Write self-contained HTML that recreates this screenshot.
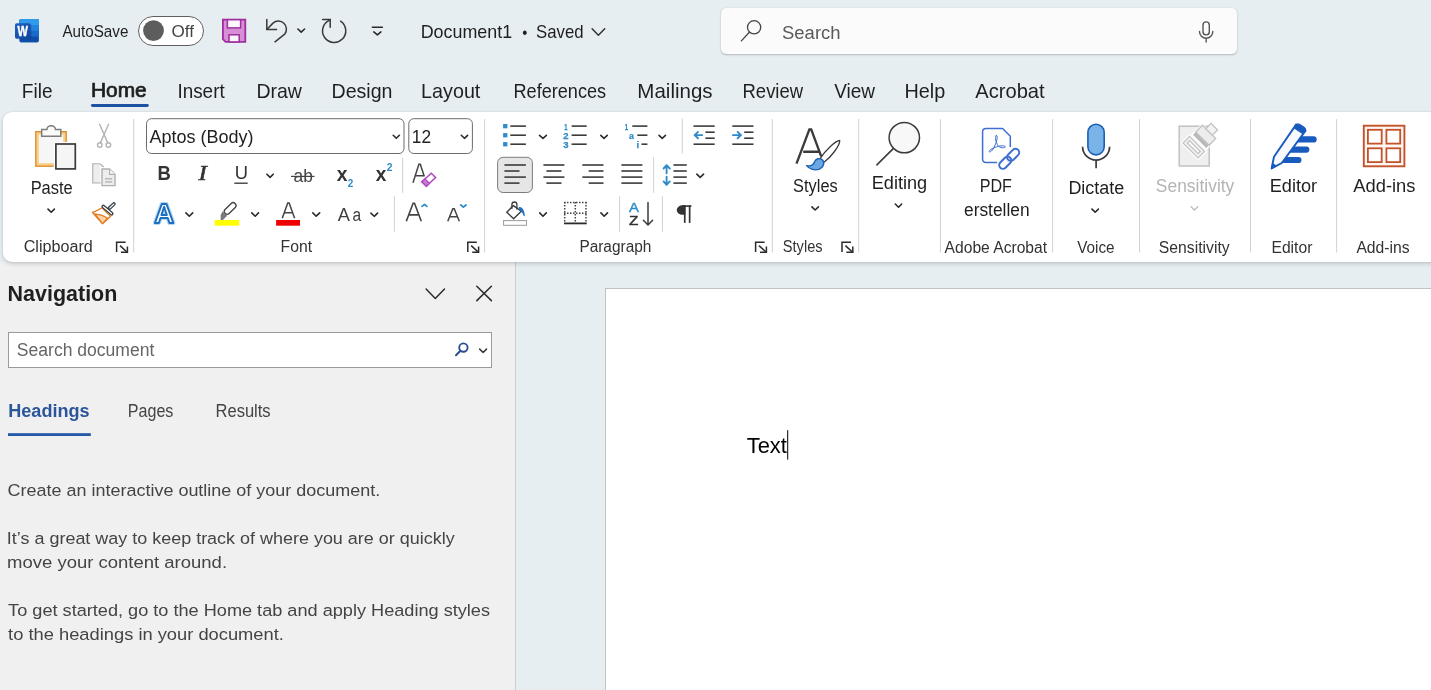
<!DOCTYPE html>
<html lang="en"><head><meta charset="utf-8"><title>Document1 - Word</title>
<style>
html,body{margin:0;padding:0}
body{width:1431px;height:690px;overflow:hidden;position:relative;background:#e7eef1;font-family:"Liberation Sans",sans-serif}
.abs{position:absolute;box-sizing:border-box}
#search{left:721px;top:8px;width:516px;height:46px;background:#fbfbfb;border-radius:5px;box-shadow:0 1px 2px rgba(0,0,0,.22),0 0 1px rgba(0,0,0,.18)}
#ribbon{left:3px;top:112px;width:1440px;height:150px;background:#fff;border-radius:9px 0 0 9px;box-shadow:0 2px 4px rgba(0,0,0,.16),0 0 2px rgba(0,0,0,.10)}
#nav{left:0;top:262px;width:516px;height:428px;background:#f0f0f0;border-right:1px solid #c9ced2}
#docbg{left:516px;top:262px;width:915px;height:428px;background:#e7eef1}
#page{left:605px;top:288px;width:900px;height:420px;background:#fff;border:1px solid #c0c3c5}
#navsearch{left:8px;top:332px;width:484px;height:36px;background:#fff;border:1px solid #9a9a9a}
#ov{left:0;top:0;will-change:transform}
</style></head><body>
<div class="abs" id="docbg"></div>
<div class="abs" id="nav"></div>
<div class="abs" id="navsearch"></div>
<div class="abs" id="page"></div>
<div class="abs" id="search"></div>
<div class="abs" id="ribbon"></div>
<svg class="abs" id="ov" width="1431" height="690" viewBox="0 0 1431 690">
<g id="wordlogo"><clipPath id="wl"><rect x="19.4" y="18.9" width="19.5" height="23.7" rx="1.8"/></clipPath><g clip-path="url(#wl)"><rect x="19" y="18.9" width="21" height="24" fill="#0f4ea6"/><rect x="19" y="18.9" width="21" height="17.6" fill="#1a6acc"/><rect x="19" y="18.9" width="21" height="11.8" fill="#2383dc"/><rect x="19" y="18.9" width="21" height="6.05" fill="#2f9cea"/></g><rect x="15.9" y="24.1" width="15.6" height="15.2" rx="1.6" fill="#0a2d6e" opacity=".28"/><defs><linearGradient id="wg" x1="0" y1="0" x2="1" y2="1"><stop offset="0" stop-color="#1f60c4"/><stop offset="1" stop-color="#12459c"/></linearGradient></defs><rect x="15" y="23.3" width="15.6" height="15.2" rx="1.6" fill="url(#wg)"/></g>
<rect x="138.5" y="16.5" width="65" height="29" fill="#fff" stroke="#5f5f5f" stroke-width="1" rx="14.5" />
<circle cx="153.5" cy="30.6" r="10.4" fill="#5d5d5d"/>
<path d="M222.9,19.7 H245.3 V41.9 H225.6 L222.9,39.2 Z" fill="#d98fd6" stroke="#9d2f9e" stroke-width="1.8" stroke-linejoin="miter"/>
<rect x="227.4" y="19.7" width="13.2" height="8.2" fill="#fdf6fd" stroke="#9d2f9e" stroke-width="1.5" rx="0" />
<rect x="229" y="34.8" width="10.2" height="7.1" fill="#fdf6fd" stroke="#9d2f9e" stroke-width="1.5" rx="0" />
<path d="M266.8,19.5 V29.4 H276.6" fill="none" stroke="#3a3a3a" stroke-width="1.5" stroke-linecap="round" stroke-linejoin="miter"/>
<path d="M267,29.2 L273,23.1 A8.1,8.1 0 0 1 284.7,34.2 L275,41.8" fill="none" stroke="#3a3a3a" stroke-width="1.5" stroke-linecap="round" stroke-linejoin="round"/>
<polyline points="297.9,29.0 301.2,32.1 304.6,29.0" fill="none" stroke="#2b2b2b" stroke-width="1.6" stroke-linecap="round" stroke-linejoin="round"/>
<path d="M322.6,19.6 H330.2 V27.3" fill="none" stroke="#3a3a3a" stroke-width="1.5" stroke-linecap="round" stroke-linejoin="miter"/>
<path d="M340.6,21.2 A11.6,11.6 0 1 1 329.8,20.1" fill="none" stroke="#3a3a3a" stroke-width="1.5" stroke-linecap="round" stroke-linejoin="round"/>
<line x1="372.3" y1="27.2" x2="382.4" y2="27.2" stroke="#2b2b2b" stroke-width="1.5" stroke-linecap="round" />
<polyline points="373.8,31.9 377.4,34.9 380.9,31.9" fill="none" stroke="#2b2b2b" stroke-width="1.6" stroke-linecap="round" stroke-linejoin="round"/>
<polyline points="592.1,28.7 598.4,35.3 604.7,28.7" fill="none" stroke="#333" stroke-width="1.5" stroke-linecap="round" stroke-linejoin="round"/>
<circle cx="754.1" cy="27.3" r="6.6" fill="none" stroke="#444" stroke-width="1.3"/>
<line x1="749.3" y1="32.3" x2="741.4" y2="40.9" stroke="#444" stroke-width="1.3" stroke-linecap="round" />
<rect x="1203" y="21.85" width="6.3" height="13" fill="none" stroke="#555" stroke-width="1.4" rx="3.15" />
<path d="M1199.5,31.4 A6.65,6.9 0 0 0 1212.8,31.4 M1206.15,38.4 V42" fill="none" stroke="#555" stroke-width="1.4" stroke-linecap="round" stroke-linejoin="round"/>
<rect x="91" y="104" width="57.8" height="2.9" fill="#1d51a3" stroke="none" stroke-width="1" rx="1.45" />
<defs><linearGradient id="og" x1="0" x2="1" y1="0" y2="0"><stop offset="0" stop-color="#d8892b"/><stop offset="1" stop-color="#fbd28c"/></linearGradient></defs>
<rect x="35.1" y="131" width="31.8" height="35.9" fill="#dd8f30" stroke="none" stroke-width="1" rx="0" />
<rect x="36.5" y="132.4" width="29" height="33.1" fill="#fbcf85" stroke="none" stroke-width="1" rx="0" />
<rect x="38.8" y="134.7" width="24.4" height="28.5" fill="#f6f6f6" stroke="none" stroke-width="1" rx="0" />
<path d="M41.7,136.3 V129.5 H46.9 A4.3,3.8 0 0 1 55.5,129.5 H60.8 V136.3 Z" fill="#fafafa" stroke="#7d7d7d" stroke-width="1.5" stroke-linejoin="miter"/>
<rect x="53.8" y="141.9" width="23.5" height="29" fill="#fff" stroke="none" stroke-width="1" rx="0" />
<rect x="55.9" y="144" width="19.4" height="24.9" fill="#f5f5f5" stroke="#3b3b3b" stroke-width="1.7" rx="0" />
<polyline points="48.0,209.1 51.2,212.2 54.4,209.1" fill="none" stroke="#2b2b2b" stroke-width="1.6" stroke-linecap="round" stroke-linejoin="round"/>
<path d="M99.6,124.2 L107.6,142.6 M108.6,124.2 L100.5,142.6" fill="none" stroke="#b4b4b4" stroke-width="1.4" stroke-linecap="round" stroke-linejoin="round"/>
<circle cx="99.8" cy="145" r="2.3" fill="none" stroke="#b4b4b4" stroke-width="1.4"/><circle cx="108.4" cy="145" r="2.3" fill="none" stroke="#b4b4b4" stroke-width="1.4"/>
<path d="M100.2,163.9 H92.9 V182.9 H100.6 M100.2,163.9 L103.6,166.9" fill="none" stroke="#b0b0b0" stroke-width="1.4" stroke-linejoin="miter"/>
<rect x="93.6" y="164.6" width="6.8" height="17.6" fill="#eeeeee" stroke="none" stroke-width="1" rx="0" />
<path d="M102,169 H109.6 L115,174.3 V185.6 H102 Z" fill="#ededed" stroke="#b0b0b0" stroke-width="1.4" stroke-linejoin="miter"/>
<path d="M109.6,169 V174.3 H115" fill="#fafafa" stroke="#b0b0b0" stroke-width="1.2" stroke-linejoin="miter"/>
<line x1="105" y1="178.8" x2="112.2" y2="178.8" stroke="#b0b0b0" stroke-width="1.3" stroke-linecap="butt" />
<line x1="105" y1="181.9" x2="112.2" y2="181.9" stroke="#b0b0b0" stroke-width="1.3" stroke-linecap="butt" />
<path d="M101.8,207.8 Q96.4,211.4 92.5,212.5 L102.5,223.7 Q107,219.8 110.6,216.2 Z" fill="#fff" stroke="#e07b1f" stroke-width="1.3" stroke-linejoin="round"/>
<path d="M94.9,213.9 Q101.4,214.6 107.5,217.9 L102.5,223.5 Z" fill="#fbd5a6" stroke="#e07b1f" stroke-width="1.1" stroke-linejoin="round"/>
<path d="M103.3,206.5 L111.7,213.7 M109.4,208.2 L113.9,204" fill="none" stroke="#37424b" stroke-width="3.7" stroke-linecap="round"/>
<path d="M103.5,206.7 L111.5,213.5 M109.8,207.9 L113.8,204.1" fill="none" stroke="#fff" stroke-width="1.3" stroke-linecap="round"/>
<g fill="none" stroke="#2b2b2b" stroke-width="1.5" stroke-linejoin="miter"><path d="M116.6,251.9 V242.2 H125.6"/><path d="M120,245.6 L127.2,252.2"/><path d="M127.4,246.4 V252.2 H121"/></g>
<rect x="133.2" y="119" width="1" height="133.5" fill="#d2d2d2"/>
<rect x="146.5" y="118.7" width="257.5" height="34.8" fill="#fff" stroke="#6b6b6b" stroke-width="1" rx="5" />
<polyline points="393.2,135.3 396.3,138.3 399.4,135.3" fill="none" stroke="#2b2b2b" stroke-width="1.6" stroke-linecap="round" stroke-linejoin="round"/>
<rect x="408.8" y="118.7" width="63.6" height="34.8" fill="#fff" stroke="#6b6b6b" stroke-width="1" rx="5" />
<polyline points="461.3,135.3 464.4,138.3 467.6,135.3" fill="none" stroke="#2b2b2b" stroke-width="1.6" stroke-linecap="round" stroke-linejoin="round"/>
<line x1="234.3" y1="183.2" x2="247.7" y2="183.2" stroke="#333" stroke-width="1.3" stroke-linecap="butt" />
<polyline points="266.9,174.2 270.1,177.4 273.2,174.2" fill="none" stroke="#2b2b2b" stroke-width="1.6" stroke-linecap="round" stroke-linejoin="round"/>
<line x1="291" y1="176.4" x2="314.5" y2="176.4" stroke="#444" stroke-width="1.2" stroke-linecap="butt" />
<rect x="402.1" y="157.5" width="1" height="35.30000000000001" fill="#d2d2d2"/>
<path d="M412.98,182.7 L418.90,164.15 H420.30 L424.29,176.4 M415.11,175.75 H424.09" fill="none" stroke="#444" stroke-width="1.5" stroke-linejoin="miter" stroke-miterlimit="1.5"/>
<path d="M431.3,173.2 L435.6,177.5 L426.4,186.3 L421.8,181.8 Z" fill="#fff" stroke="#fff" stroke-width="3" stroke-linecap="round" stroke-linejoin="round"/>
<path d="M431.3,173.2 L435.6,177.5 L426.4,186.3 L421.8,181.8 Z" fill="#fff" stroke="#b146c2" stroke-width="1.5" stroke-linejoin="miter"/>
<path d="M425,178.8 L429.4,183.3 L426.4,186.3 L421.8,181.8 Z" fill="#c77bd3" stroke="#b146c2" stroke-width="1.2" stroke-linejoin="miter"/>
<text x="154.2" y="222.5" font-family="Liberation Sans, sans-serif" font-weight="bold" font-size="26.8" textLength="19.8" lengthAdjust="spacingAndGlyphs" fill="none" stroke="#b3d8f3" stroke-width="4" stroke-linejoin="round">A</text>
<text x="154.2" y="222.5" font-family="Liberation Sans, sans-serif" font-weight="bold" font-size="26.8" textLength="19.8" lengthAdjust="spacingAndGlyphs" fill="#fff" stroke="#1c6fc0" stroke-width="1.9" stroke-linejoin="round">A</text>
<polyline points="185.9,212.9 189.3,216.2 192.7,212.9" fill="none" stroke="#2b2b2b" stroke-width="1.6" stroke-linecap="round" stroke-linejoin="round"/>
<g transform="translate(229.7,208.9) rotate(-44)"><rect x="-6.4" y="-2.9" width="14" height="5.8" rx="2.7" fill="#fff" stroke="#444" stroke-width="1.4"/><path d="M-6.6,-3.1 L-10.6,-2 L-15.8,3.4 L-6.6,3.1 Z" fill="#7a7a7a"/></g>
<rect x="214.7" y="220" width="24.5" height="5.7" fill="#ffff00" stroke="none" stroke-width="1" rx="0" />
<polyline points="251.8,212.9 255.2,216.2 258.5,212.9" fill="none" stroke="#2b2b2b" stroke-width="1.6" stroke-linecap="round" stroke-linejoin="round"/>
<path d="M282.28,218.2 L287.75,202.95 H289.15 L294.62,218.2 M284.14,212.76 H292.76" fill="none" stroke="#444" stroke-width="1.5" stroke-linejoin="miter" stroke-miterlimit="1.5"/>
<rect x="276.1" y="220" width="23.9" height="5.7" fill="#ee0000" stroke="none" stroke-width="1" rx="0" />
<polyline points="312.8,212.9 316.2,216.2 319.7,212.9" fill="none" stroke="#2b2b2b" stroke-width="1.6" stroke-linecap="round" stroke-linejoin="round"/>
<polyline points="370.9,213.1 374.2,216.3 377.6,213.1" fill="none" stroke="#2b2b2b" stroke-width="1.6" stroke-linecap="round" stroke-linejoin="round"/>
<rect x="393.9" y="196.3" width="1" height="35.5" fill="#d2d2d2"/>
<path d="M406.32,221.3 L413.10,203.3 H414.50 L421.28,221.3 M408.63,214.91 H418.97" fill="none" stroke="#444" stroke-width="1.6" stroke-linejoin="miter" stroke-miterlimit="1.5"/>
<polyline points="422.1,206.4 424.5,204.4 426.9,206.4" fill="none" stroke="#2e8bc8" stroke-width="1.8" stroke-linecap="round" stroke-linejoin="round"/>
<path d="M447.78,221.3 L452.85,208.65 H454.25 L459.32,221.3 M449.50,216.74 H457.60" fill="none" stroke="#444" stroke-width="1.5" stroke-linejoin="miter" stroke-miterlimit="1.5"/>
<polyline points="460.8,205.0 463.4,207.1 466.0,205.0" fill="none" stroke="#2e8bc8" stroke-width="1.8" stroke-linecap="round" stroke-linejoin="round"/>
<g fill="none" stroke="#2b2b2b" stroke-width="1.5" stroke-linejoin="miter"><path d="M467.8,251.9 V242.2 H476.8"/><path d="M471.2,245.6 L478.4,252.2"/><path d="M478.59999999999997,246.4 V252.2 H472.2"/></g>
<rect x="484.1" y="119" width="1" height="133.5" fill="#d2d2d2"/>
<rect x="503.1" y="124.0" width="4.3" height="4.3" fill="#2e8bc8" stroke="none" stroke-width="1" rx="0" />
<line x1="510.3" y1="126.1" x2="525.9" y2="126.1" stroke="#3b3b3b" stroke-width="1.6" stroke-linecap="butt" />
<rect x="503.1" y="133.1" width="4.3" height="4.3" fill="#2e8bc8" stroke="none" stroke-width="1" rx="0" />
<line x1="510.3" y1="135.2" x2="525.9" y2="135.2" stroke="#3b3b3b" stroke-width="1.6" stroke-linecap="butt" />
<rect x="503.1" y="142.1" width="4.3" height="4.3" fill="#2e8bc8" stroke="none" stroke-width="1" rx="0" />
<line x1="510.3" y1="144.2" x2="525.9" y2="144.2" stroke="#3b3b3b" stroke-width="1.6" stroke-linecap="butt" />
<polyline points="539.5,135.3 543.0,138.3 546.4,135.3" fill="none" stroke="#2b2b2b" stroke-width="1.6" stroke-linecap="round" stroke-linejoin="round"/>
<line x1="571.6" y1="126.1" x2="586.7" y2="126.1" stroke="#3b3b3b" stroke-width="1.6" stroke-linecap="butt" />
<line x1="571.6" y1="135.2" x2="586.7" y2="135.2" stroke="#3b3b3b" stroke-width="1.6" stroke-linecap="butt" />
<line x1="571.6" y1="144.2" x2="586.7" y2="144.2" stroke="#3b3b3b" stroke-width="1.6" stroke-linecap="butt" />
<polyline points="600.8,135.3 604.0,138.3 607.3,135.3" fill="none" stroke="#2b2b2b" stroke-width="1.6" stroke-linecap="round" stroke-linejoin="round"/>
<line x1="632.3" y1="126.1" x2="647.4" y2="126.1" stroke="#3b3b3b" stroke-width="1.6" stroke-linecap="butt" />
<line x1="637.3" y1="135.2" x2="647.4" y2="135.2" stroke="#3b3b3b" stroke-width="1.6" stroke-linecap="butt" />
<line x1="641.5" y1="144.2" x2="647.4" y2="144.2" stroke="#3b3b3b" stroke-width="1.6" stroke-linecap="butt" />
<polyline points="659.0,135.3 662.2,138.3 665.5,135.3" fill="none" stroke="#2b2b2b" stroke-width="1.6" stroke-linecap="round" stroke-linejoin="round"/>
<rect x="681.8" y="118.5" width="1" height="34.900000000000006" fill="#d2d2d2"/>
<line x1="693.5" y1="126.1" x2="714.7" y2="126.1" stroke="#3b3b3b" stroke-width="1.6" stroke-linecap="butt" />
<line x1="693.5" y1="144.2" x2="714.7" y2="144.2" stroke="#3b3b3b" stroke-width="1.6" stroke-linecap="butt" />
<line x1="705.4" y1="132.2" x2="714.7" y2="132.2" stroke="#3b3b3b" stroke-width="1.6" stroke-linecap="butt" />
<line x1="705.4" y1="138.2" x2="714.7" y2="138.2" stroke="#3b3b3b" stroke-width="1.6" stroke-linecap="butt" />
<line x1="732.3" y1="126.1" x2="753.5" y2="126.1" stroke="#3b3b3b" stroke-width="1.6" stroke-linecap="butt" />
<line x1="732.3" y1="144.2" x2="753.5" y2="144.2" stroke="#3b3b3b" stroke-width="1.6" stroke-linecap="butt" />
<line x1="744.1999999999999" y1="132.2" x2="753.5" y2="132.2" stroke="#3b3b3b" stroke-width="1.6" stroke-linecap="butt" />
<line x1="744.1999999999999" y1="138.2" x2="753.5" y2="138.2" stroke="#3b3b3b" stroke-width="1.6" stroke-linecap="butt" />
<path d="M702.2,135.1 H694.8 M698,131.9 L694.6,135.1 L698,138.3" fill="none" stroke="#2e8bc8" stroke-width="1.9" stroke-linecap="round" stroke-linejoin="round"/>
<path d="M732.9,135.1 H740.8 M737.6,131.9 L741,135.1 L737.6,138.3" fill="none" stroke="#2e8bc8" stroke-width="1.9" stroke-linecap="round" stroke-linejoin="round"/>
<rect x="497.6" y="157.3" width="34.8" height="35.2" fill="#e6e6e6" stroke="#7c7c7c" stroke-width="1" rx="5.5" />
<line x1="504.4" y1="165" x2="525.9" y2="165" stroke="#3b3b3b" stroke-width="1.6" stroke-linecap="butt" />
<line x1="504.4" y1="171" x2="519.5" y2="171" stroke="#3b3b3b" stroke-width="1.6" stroke-linecap="butt" />
<line x1="504.4" y1="177.1" x2="525.9" y2="177.1" stroke="#3b3b3b" stroke-width="1.6" stroke-linecap="butt" />
<line x1="504.4" y1="183.1" x2="519.5" y2="183.1" stroke="#3b3b3b" stroke-width="1.6" stroke-linecap="butt" />
<line x1="543.4" y1="165" x2="564.4" y2="165" stroke="#3b3b3b" stroke-width="1.6" stroke-linecap="butt" />
<line x1="546.4" y1="171" x2="561.5" y2="171" stroke="#3b3b3b" stroke-width="1.6" stroke-linecap="butt" />
<line x1="543.4" y1="177.1" x2="564.4" y2="177.1" stroke="#3b3b3b" stroke-width="1.6" stroke-linecap="butt" />
<line x1="546.4" y1="183.1" x2="561.5" y2="183.1" stroke="#3b3b3b" stroke-width="1.6" stroke-linecap="butt" />
<line x1="582.3" y1="165" x2="603.5" y2="165" stroke="#3b3b3b" stroke-width="1.6" stroke-linecap="butt" />
<line x1="588.7" y1="171" x2="603.5" y2="171" stroke="#3b3b3b" stroke-width="1.6" stroke-linecap="butt" />
<line x1="582.3" y1="177.1" x2="603.5" y2="177.1" stroke="#3b3b3b" stroke-width="1.6" stroke-linecap="butt" />
<line x1="588.7" y1="183.1" x2="603.5" y2="183.1" stroke="#3b3b3b" stroke-width="1.6" stroke-linecap="butt" />
<line x1="621.4" y1="165" x2="642.4" y2="165" stroke="#3b3b3b" stroke-width="1.6" stroke-linecap="butt" />
<line x1="621.4" y1="171" x2="642.4" y2="171" stroke="#3b3b3b" stroke-width="1.6" stroke-linecap="butt" />
<line x1="621.4" y1="177.1" x2="642.4" y2="177.1" stroke="#3b3b3b" stroke-width="1.6" stroke-linecap="butt" />
<line x1="621.4" y1="183.1" x2="642.4" y2="183.1" stroke="#3b3b3b" stroke-width="1.6" stroke-linecap="butt" />
<rect x="653.1" y="157.2" width="1" height="35.60000000000002" fill="#d2d2d2"/>
<line x1="673.4" y1="165" x2="686.8" y2="165" stroke="#3b3b3b" stroke-width="1.6" stroke-linecap="butt" />
<line x1="673.4" y1="171" x2="686.8" y2="171" stroke="#3b3b3b" stroke-width="1.6" stroke-linecap="butt" />
<line x1="673.4" y1="177.1" x2="686.8" y2="177.1" stroke="#3b3b3b" stroke-width="1.6" stroke-linecap="butt" />
<line x1="673.4" y1="183.1" x2="686.8" y2="183.1" stroke="#3b3b3b" stroke-width="1.6" stroke-linecap="butt" />
<path d="M666.6,173.3 V165.4 M663.6,168.5 L666.6,165.2 L669.8,168.5 M666.6,176.7 V184.6 M663.6,181.4 L666.6,184.8 L669.8,181.4" fill="none" stroke="#2e8bc8" stroke-width="1.9" stroke-linecap="round" stroke-linejoin="round"/>
<polyline points="696.8,174.2 700.2,177.4 703.6,174.2" fill="none" stroke="#2b2b2b" stroke-width="1.6" stroke-linecap="round" stroke-linejoin="round"/>
<path d="M513.4,205.6 L521.3,211.3 L513.6,218.8 L506.8,212.2 Z" fill="#fff" stroke="#3b3b3b" stroke-width="1.4" stroke-linejoin="round"/>
<path d="M511.9,208.6 V204.4 Q512,202 514.4,202 Q516.9,202 516.9,204.6 V209" fill="none" stroke="#3b3b3b" stroke-width="1.3" stroke-linecap="round" stroke-linejoin="round"/>
<path d="M519.3,207.6 Q523.6,207.8 524.2,215.6 Q523.2,211.6 520.6,210.6 Z" fill="#1e6fbf" stroke="#1e6fbf" stroke-width="1.2" stroke-linecap="round" stroke-linejoin="round"/>
<rect x="503.6" y="220.6" width="22.9" height="4.7" fill="#fff" stroke="#9a9a9a" stroke-width="1" rx="0" />
<polyline points="539.7,212.9 543.0,216.2 546.3,212.9" fill="none" stroke="#2b2b2b" stroke-width="1.6" stroke-linecap="round" stroke-linejoin="round"/>
<line x1="564" y1="202.6" x2="586.8" y2="202.6" stroke="#444" stroke-width="1.5" stroke-linecap="butt" stroke-dasharray="1.5 1.5"/>
<line x1="564" y1="213.2" x2="586.8" y2="213.2" stroke="#444" stroke-width="1.5" stroke-linecap="butt" stroke-dasharray="1.5 1.5"/>
<line x1="564.7" y1="202" x2="564.7" y2="222" stroke="#444" stroke-width="1.5" stroke-linecap="butt" stroke-dasharray="1.5 1.5"/>
<line x1="575.3" y1="202" x2="575.3" y2="222" stroke="#444" stroke-width="1.5" stroke-linecap="butt" stroke-dasharray="1.5 1.5"/>
<line x1="586" y1="202" x2="586" y2="222" stroke="#444" stroke-width="1.5" stroke-linecap="butt" stroke-dasharray="1.5 1.5"/>
<line x1="564" y1="223.4" x2="586.8" y2="223.4" stroke="#2b2b2b" stroke-width="1.8" stroke-linecap="butt" />
<polyline points="600.9,212.9 604.2,216.2 607.5,212.9" fill="none" stroke="#2b2b2b" stroke-width="1.6" stroke-linecap="round" stroke-linejoin="round"/>
<rect x="619.1" y="196.3" width="1" height="35.5" fill="#d2d2d2"/>
<path d="M648,202.4 V224.8 M643.4,220.3 L648,225 L652.6,220.3" fill="none" stroke="#3b3b3b" stroke-width="1.5" stroke-linecap="round" stroke-linejoin="round"/>
<rect x="661.9" y="196.3" width="1" height="35.5" fill="#d2d2d2"/>
<path d="M685.4,205.3 H682.6 A5.9,4.75 0 0 0 682.6,214.8 H685.4 Z" fill="#333" stroke="none" stroke-width="0" stroke-linecap="round" stroke-linejoin="round"/>
<rect x="682" y="205.3" width="9.4" height="1.6" fill="#333" stroke="none" stroke-width="1" rx="0" />
<rect x="683.9" y="205.3" width="1.7" height="17.6" fill="#333" stroke="none" stroke-width="1" rx="0" />
<rect x="688.8" y="205.3" width="1.7" height="17.6" fill="#333" stroke="none" stroke-width="1" rx="0" />
<g fill="none" stroke="#2b2b2b" stroke-width="1.5" stroke-linejoin="miter"><path d="M755.6,251.9 V242.2 H764.6"/><path d="M759,245.6 L766.2,252.2"/><path d="M766.4,246.4 V252.2 H760"/></g>
<rect x="771.8" y="119" width="1" height="133.5" fill="#d2d2d2"/>
<path d="M796.5,163.6 L809.4,129.4 H811.2 L821.2,156.4 M803.2,151.7 H819.4" fill="none" stroke="#3b3b3b" stroke-width="2.35" stroke-linejoin="miter" stroke-miterlimit="2" stroke-linecap="butt"/>
<path d="M839.7,140.5 C840,145.4 831.2,157 824,162.3 L820.2,158.5 C825.2,150.4 835.8,140.4 839.7,140.5 Z" fill="#fff" stroke="#3b3b3b" stroke-width="1.3" stroke-linecap="round" stroke-linejoin="round"/>
<path d="M806.6,165.6 C811,166.6 813.6,164.6 814.6,161.8 C815.8,158.6 819.6,157.6 822.2,159.8 C825,162.4 823.8,167.6 818.8,169.4 C814,170.8 809,168.6 806.6,165.6 Z" fill="#6aa8e4" stroke="#1d62b0" stroke-width="1.4" stroke-linecap="round" stroke-linejoin="round"/>
<polyline points="811.9,206.9 815.1,210.0 818.4,206.9" fill="none" stroke="#2b2b2b" stroke-width="1.6" stroke-linecap="round" stroke-linejoin="round"/>
<g fill="none" stroke="#2b2b2b" stroke-width="1.5" stroke-linejoin="miter"><path d="M842.0,251.9 V242.2 H851.0"/><path d="M845.4,245.6 L852.6,252.2"/><path d="M852.8,246.4 V252.2 H846.4"/></g>
<rect x="858.2" y="119" width="1" height="133.5" fill="#d2d2d2"/>
<circle cx="904.3" cy="137.6" r="15.2" fill="#f8f8f8" stroke="#3b3b3b" stroke-width="1.5"/>
<line x1="893.2" y1="148.6" x2="876.9" y2="164.9" stroke="#3b3b3b" stroke-width="1.6" stroke-linecap="round" />
<polyline points="895.3,204.0 898.5,207.2 901.7,204.0" fill="none" stroke="#2b2b2b" stroke-width="1.6" stroke-linecap="round" stroke-linejoin="round"/>
<rect x="939.9" y="119" width="1" height="133.5" fill="#d2d2d2"/>
<path d="M1010.3,146.6 V136.3 L1002.6,128.4 H986 Q982.6,128.4 982.6,131.8 V159 Q982.6,162.4 986,162.4 H996.6" fill="none" stroke="#3f6fd1" stroke-width="1.5" stroke-linecap="round" stroke-linejoin="round"/>
<path d="M996.2,135.6 C994.6,135.8 995.4,140.6 997.4,144.6 C998.8,147.6 1003,148.6 1005.2,147.2 C1006,146.2 1003.6,145.4 999.8,146 C995.6,146.8 990.6,149 989.4,150.8 C988.4,152.4 990.6,152.4 992.4,150 C994.4,147.4 997.4,140.4 997.2,137 C997.2,135.8 996.6,135.5 996.2,135.6 Z" fill="none" stroke="#3f6fd1" stroke-width="1" stroke-linecap="round" stroke-linejoin="round"/>
<g transform="translate(1009.2,158.8) rotate(-45)" fill="none" stroke="#3f6fd1" stroke-width="2"><rect x="-12.6" y="-3.7" width="14" height="7.4" rx="3.7" stroke="#fff" stroke-width="4.4"/><rect x="-1.4" y="-3.7" width="14" height="7.4" rx="3.7" stroke="#fff" stroke-width="4.4"/><rect x="-12.6" y="-3.7" width="14" height="7.4" rx="3.7"/><rect x="-1.4" y="-3.7" width="14" height="7.4" rx="3.7"/></g>
<rect x="1052.1" y="119" width="1" height="133.5" fill="#d2d2d2"/>
<rect x="1087.9" y="124.3" width="16.3" height="30.6" fill="#7ab3e8" stroke="#1c5fb3" stroke-width="1.6" rx="8.15" />
<path d="M1082.6,146.8 A13.5,13.3 0 0 0 1109.6,146.8 M1096.1,160.3 V168.2" fill="none" stroke="#3b3b3b" stroke-width="1.7" stroke-linecap="butt"/>
<polyline points="1091.9,209.1 1095.2,212.2 1098.4,209.1" fill="none" stroke="#2b2b2b" stroke-width="1.6" stroke-linecap="round" stroke-linejoin="round"/>
<rect x="1139.0" y="119" width="1" height="133.5" fill="#d2d2d2"/>
<rect x="1179.2" y="126.2" width="30" height="39.8" fill="#efefef" stroke="#c2c2c2" stroke-width="1.5" rx="0" />
<g transform="translate(1193.8,147.2) rotate(-45)"><rect x="-4.6" y="-10.6" width="9.2" height="21.2" fill="#f3f3f3" stroke="#fff" stroke-width="3.6"/><rect x="8.2" y="-9.4" width="13.4" height="18.8" fill="#ececec" stroke="#fff" stroke-width="3"/><rect x="-4.6" y="-10.6" width="9.2" height="21.2" fill="#f3f3f3" stroke="#c2c2c2" stroke-width="1.3"/><rect x="-1.6" y="-7.6" width="3.2" height="15.2" fill="#fafafa" stroke="#c2c2c2" stroke-width="1.2"/><rect x="8.2" y="-9.4" width="4" height="18.8" fill="#b9b9b9"/><rect x="12.2" y="-9.4" width="9.4" height="18.8" fill="#ededed" stroke="#c2c2c2" stroke-width="1.3"/><rect x="21.6" y="-4.6" width="7.4" height="9.2" fill="#f3f3f3" stroke="#c2c2c2" stroke-width="1.3"/></g>
<polyline points="1191.1,206.8 1194.4,210.0 1197.7,206.8" fill="none" stroke="#bdbdbd" stroke-width="1.4" stroke-linecap="round" stroke-linejoin="round"/>
<rect x="1250.0" y="119" width="1" height="133.5" fill="#d2d2d2"/>
<line x1="1293" y1="139.4" x2="1313.6" y2="139.4" stroke="#185abd" stroke-width="6.2" stroke-linecap="round" />
<line x1="1288" y1="149.6" x2="1306.3" y2="149.6" stroke="#185abd" stroke-width="6.2" stroke-linecap="round" />
<line x1="1282" y1="160" x2="1298.4" y2="160" stroke="#185abd" stroke-width="6.2" stroke-linecap="round" />
<path d="M1296.2,124.4 L1305.6,130.6 L1281.8,163 L1271.6,168.4 L1274,156.8 Z" fill="#f7f9fd" stroke="#185abd" stroke-width="1.9" stroke-linejoin="round"/>
<path d="M1296.4,124.6 Q1297.8,123.4 1299.6,124.2 L1304.8,127.6 Q1306,128.8 1305.2,130.6 L1302.8,133.8 L1294,128 Z" fill="#185abd" stroke="#185abd" stroke-width="1" stroke-linejoin="round"/>
<path d="M1271.6,168.4 L1272.6,163.4 L1276,165.8 Z" fill="#185abd" stroke="#185abd" stroke-width="1" stroke-linecap="round" stroke-linejoin="round"/>
<rect x="1336.1" y="119" width="1" height="133.5" fill="#d2d2d2"/>
<rect x="1363.8" y="125.7" width="40.6" height="40.6" fill="#fdf7f4" stroke="#c4532b" stroke-width="1.9" rx="0" />
<rect x="1367.9" y="129.8" width="13.8" height="13.8" fill="#fff" stroke="#c4532b" stroke-width="1.8" rx="0" />
<rect x="1386.4" y="129.8" width="13.8" height="13.8" fill="#fff" stroke="#c4532b" stroke-width="1.8" rx="0" />
<rect x="1367.9" y="148.3" width="13.8" height="13.8" fill="#fff" stroke="#c4532b" stroke-width="1.8" rx="0" />
<rect x="1386.4" y="148.3" width="13.8" height="13.8" fill="#fff" stroke="#c4532b" stroke-width="1.8" rx="0" />
<polyline points="426.1,289.1 435.3,298.5 444.5,289.1" fill="none" stroke="#2b2b2b" stroke-width="1.5" stroke-linecap="round" stroke-linejoin="round"/>
<path d="M476.8,286.2 L491.4,300.6 M491.4,286.2 L476.8,300.6" fill="none" stroke="#2b2b2b" stroke-width="1.5" stroke-linecap="round"/>
<circle cx="463.4" cy="347.6" r="4.2" fill="none" stroke="#2b4f8e" stroke-width="1.9"/>
<line x1="460.4" y1="350.8" x2="456" y2="355.2" stroke="#2b4f8e" stroke-width="2" stroke-linecap="round" />
<polyline points="479.7,349.1 483.1,352.5 486.5,349.1" fill="none" stroke="#333" stroke-width="1.5" stroke-linecap="round" stroke-linejoin="round"/>
<rect x="8" y="433.2" width="82.8" height="2.8" fill="#2358a8" stroke="none" stroke-width="1" rx="0" />
<rect x="787.2" y="430.2" width="1" height="29.4" fill="#000" stroke="none" stroke-width="1" rx="0" />
<g id="labels">
<text x="62.40" y="37" font-family="Liberation Sans, sans-serif" font-size="16" fill="#1f1f1f" textLength="66.01" lengthAdjust="spacingAndGlyphs" >AutoSave</text>
<text x="171.60" y="37" font-family="Liberation Sans, sans-serif" font-size="16" fill="#444" textLength="22.45" lengthAdjust="spacingAndGlyphs" >Off</text>
<text x="420.68" y="37.7" font-family="Liberation Sans, sans-serif" font-size="17.7" fill="#1f1f1f" textLength="91.53" lengthAdjust="spacingAndGlyphs" >Document1</text>
<text x="522.14" y="37.5" font-family="Liberation Sans, sans-serif" font-size="16" fill="#1f1f1f" textLength="5.11" lengthAdjust="spacingAndGlyphs" >•</text>
<text x="535.99" y="37.7" font-family="Liberation Sans, sans-serif" font-size="17.7" fill="#1f1f1f" textLength="47.61" lengthAdjust="spacingAndGlyphs" >Saved</text>
<text x="782.04" y="38.5" font-family="Liberation Sans, sans-serif" font-size="19.2" fill="#5a5a5a" textLength="58.51" lengthAdjust="spacingAndGlyphs" >Search</text>
<text x="21.86" y="97.7" font-family="Liberation Sans, sans-serif" font-size="19.8" fill="#1f1f1f" textLength="30.69" lengthAdjust="spacingAndGlyphs" >File</text>
<text x="90.97" y="97.4" font-family="Liberation Sans, sans-serif" font-size="19.3" fill="#1f1f1f" textLength="55.74" lengthAdjust="spacingAndGlyphs" stroke="#1f1f1f" stroke-width="0.7">Home</text>
<text x="177.43" y="97.6" font-family="Liberation Sans, sans-serif" font-size="19.8" fill="#1f1f1f" textLength="47.26" lengthAdjust="spacingAndGlyphs" >Insert</text>
<text x="256.42" y="97.6" font-family="Liberation Sans, sans-serif" font-size="19.8" fill="#1f1f1f" textLength="45.50" lengthAdjust="spacingAndGlyphs" >Draw</text>
<text x="331.51" y="97.6" font-family="Liberation Sans, sans-serif" font-size="19.8" fill="#1f1f1f" textLength="61.00" lengthAdjust="spacingAndGlyphs" >Design</text>
<text x="421.10" y="97.6" font-family="Liberation Sans, sans-serif" font-size="19.8" fill="#1f1f1f" textLength="59.25" lengthAdjust="spacingAndGlyphs" >Layout</text>
<text x="513.53" y="97.6" font-family="Liberation Sans, sans-serif" font-size="19.8" fill="#1f1f1f" textLength="92.59" lengthAdjust="spacingAndGlyphs" >References</text>
<text x="637.34" y="97.6" font-family="Liberation Sans, sans-serif" font-size="19.8" fill="#1f1f1f" textLength="75.24" lengthAdjust="spacingAndGlyphs" >Mailings</text>
<text x="742.50" y="97.6" font-family="Liberation Sans, sans-serif" font-size="19.8" fill="#1f1f1f" textLength="60.60" lengthAdjust="spacingAndGlyphs" >Review</text>
<text x="834.16" y="97.6" font-family="Liberation Sans, sans-serif" font-size="19.8" fill="#1f1f1f" textLength="40.87" lengthAdjust="spacingAndGlyphs" >View</text>
<text x="904.50" y="97.6" font-family="Liberation Sans, sans-serif" font-size="19.8" fill="#1f1f1f" textLength="40.79" lengthAdjust="spacingAndGlyphs" >Help</text>
<text x="975.30" y="97.6" font-family="Liberation Sans, sans-serif" font-size="19.8" fill="#1f1f1f" textLength="69.29" lengthAdjust="spacingAndGlyphs" >Acrobat</text>
<text x="30.63" y="193.8" font-family="Liberation Sans, sans-serif" font-size="18" fill="#1f1f1f" textLength="42.09" lengthAdjust="spacingAndGlyphs" >Paste</text>
<text x="149.50" y="142.5" font-family="Liberation Sans, sans-serif" font-size="17.8" fill="#1f1f1f" textLength="104.04" lengthAdjust="spacingAndGlyphs" >Aptos (Body)</text>
<text x="411.78" y="142.5" font-family="Liberation Sans, sans-serif" font-size="17.8" fill="#1f1f1f" textLength="19.28" lengthAdjust="spacingAndGlyphs" >12</text>
<text x="793.12" y="191.8" font-family="Liberation Sans, sans-serif" font-size="18" fill="#1f1f1f" textLength="44.56" lengthAdjust="spacingAndGlyphs" >Styles</text>
<text x="871.69" y="188.9" font-family="Liberation Sans, sans-serif" font-size="18" fill="#1f1f1f" textLength="55.52" lengthAdjust="spacingAndGlyphs" >Editing</text>
<text x="979.66" y="191.8" font-family="Liberation Sans, sans-serif" font-size="18" fill="#1f1f1f" textLength="32.21" lengthAdjust="spacingAndGlyphs" >PDF</text>
<text x="963.98" y="215.8" font-family="Liberation Sans, sans-serif" font-size="18" fill="#1f1f1f" textLength="65.68" lengthAdjust="spacingAndGlyphs" >erstellen</text>
<text x="1068.40" y="193.8" font-family="Liberation Sans, sans-serif" font-size="18" fill="#1f1f1f" textLength="55.87" lengthAdjust="spacingAndGlyphs" >Dictate</text>
<text x="1155.87" y="191.8" font-family="Liberation Sans, sans-serif" font-size="18" fill="#b4b4b4" textLength="78.46" lengthAdjust="spacingAndGlyphs" >Sensitivity</text>
<text x="1269.69" y="191.8" font-family="Liberation Sans, sans-serif" font-size="18" fill="#1f1f1f" textLength="47.40" lengthAdjust="spacingAndGlyphs" >Editor</text>
<text x="1353.30" y="191.8" font-family="Liberation Sans, sans-serif" font-size="18" fill="#1f1f1f" textLength="62.14" lengthAdjust="spacingAndGlyphs" >Add-ins</text>
<text x="23.73" y="251.7" font-family="Liberation Sans, sans-serif" font-size="15.8" fill="#333" textLength="69.01" lengthAdjust="spacingAndGlyphs" >Clipboard</text>
<text x="280.55" y="251.7" font-family="Liberation Sans, sans-serif" font-size="15.8" fill="#333" textLength="31.56" lengthAdjust="spacingAndGlyphs" >Font</text>
<text x="579.38" y="251.7" font-family="Liberation Sans, sans-serif" font-size="15.8" fill="#333" textLength="72.03" lengthAdjust="spacingAndGlyphs" >Paragraph</text>
<text x="782.81" y="251.7" font-family="Liberation Sans, sans-serif" font-size="15.8" fill="#333" textLength="39.78" lengthAdjust="spacingAndGlyphs" >Styles</text>
<text x="944.60" y="252.7" font-family="Liberation Sans, sans-serif" font-size="15.8" fill="#333" textLength="102.44" lengthAdjust="spacingAndGlyphs" >Adobe Acrobat</text>
<text x="1077.16" y="252.7" font-family="Liberation Sans, sans-serif" font-size="15.8" fill="#333" textLength="37.48" lengthAdjust="spacingAndGlyphs" >Voice</text>
<text x="1158.85" y="252.7" font-family="Liberation Sans, sans-serif" font-size="15.8" fill="#333" textLength="70.86" lengthAdjust="spacingAndGlyphs" >Sensitivity</text>
<text x="1271.46" y="252.7" font-family="Liberation Sans, sans-serif" font-size="15.8" fill="#333" textLength="40.92" lengthAdjust="spacingAndGlyphs" >Editor</text>
<text x="1356.40" y="252.7" font-family="Liberation Sans, sans-serif" font-size="15.8" fill="#333" textLength="53.26" lengthAdjust="spacingAndGlyphs" >Add-ins</text>
<text x="7.62" y="300.8" font-family="Liberation Sans, sans-serif" font-size="21.7" font-weight="bold" fill="#1f1f1f" textLength="109.75" lengthAdjust="spacingAndGlyphs" >Navigation</text>
<text x="16.87" y="355.6" font-family="Liberation Sans, sans-serif" font-size="18" fill="#666" textLength="137.52" lengthAdjust="spacingAndGlyphs" >Search document</text>
<text x="8.26" y="416.8" font-family="Liberation Sans, sans-serif" font-size="18.3" font-weight="bold" fill="#2b579a" textLength="81.43" lengthAdjust="spacingAndGlyphs" >Headings</text>
<text x="127.78" y="416.8" font-family="Liberation Sans, sans-serif" font-size="18.3" fill="#444" textLength="45.64" lengthAdjust="spacingAndGlyphs" >Pages</text>
<text x="215.54" y="416.8" font-family="Liberation Sans, sans-serif" font-size="18.3" fill="#444" textLength="55.11" lengthAdjust="spacingAndGlyphs" >Results</text>
<text x="7.63" y="495.8" font-family="Liberation Sans, sans-serif" font-size="17.4" fill="#444" textLength="372.51" lengthAdjust="spacingAndGlyphs" >Create an interactive outline of your document.</text>
<text x="6.85" y="544.1" font-family="Liberation Sans, sans-serif" font-size="17.4" fill="#444" textLength="447.78" lengthAdjust="spacingAndGlyphs" >It’s a great way to keep track of where you are or quickly</text>
<text x="7.07" y="568" font-family="Liberation Sans, sans-serif" font-size="17.4" fill="#444" textLength="219.97" lengthAdjust="spacingAndGlyphs" >move your content around.</text>
<text x="8.14" y="615.9" font-family="Liberation Sans, sans-serif" font-size="17.4" fill="#444" textLength="481.90" lengthAdjust="spacingAndGlyphs" >To get started, go to the Home tab and apply Heading styles</text>
<text x="8.14" y="639.7" font-family="Liberation Sans, sans-serif" font-size="17.4" fill="#444" textLength="275.74" lengthAdjust="spacingAndGlyphs" >to the headings in your document.</text>
<text x="746.72" y="452.8" font-family="Liberation Sans, sans-serif" font-size="22.8" fill="#000" textLength="40.14" lengthAdjust="spacingAndGlyphs" >Text</text>
<text x="17.50" y="35.8" font-family="Liberation Sans, sans-serif" font-size="14.2" font-weight="bold" fill="#fff" textLength="10.33" lengthAdjust="spacingAndGlyphs" stroke="#fff" stroke-width="0.45">W</text>
<text x="157.62" y="180.3" font-family="Liberation Sans, sans-serif" font-size="19.6" font-weight="bold" fill="#333" textLength="13.33" lengthAdjust="spacingAndGlyphs" >B</text>
<text x="198.60" y="180.3" font-family="Liberation Serif, serif" font-size="20.6" font-style="italic" fill="#333" textLength="8.32" lengthAdjust="spacingAndGlyphs" stroke="#333" stroke-width="0.55">I</text>
<text x="234.74" y="179.4" font-family="Liberation Sans, sans-serif" font-size="18.2" fill="#333" textLength="13.27" lengthAdjust="spacingAndGlyphs" >U</text>
<text x="293.51" y="181.7" font-family="Liberation Sans, sans-serif" font-size="18.8" fill="#444" textLength="19.32" lengthAdjust="spacingAndGlyphs" >ab</text>
<text x="336.75" y="180.8" font-family="Liberation Sans, sans-serif" font-size="19.4" font-weight="bold" fill="#333" textLength="10.74" lengthAdjust="spacingAndGlyphs" >x</text>
<text x="347.86" y="186.7" font-family="Liberation Sans, sans-serif" font-size="10.4" font-weight="bold" fill="#2e8bc8" textLength="5.51" lengthAdjust="spacingAndGlyphs" >2</text>
<text x="375.85" y="180.8" font-family="Liberation Sans, sans-serif" font-size="19.4" font-weight="bold" fill="#333" textLength="10.64" lengthAdjust="spacingAndGlyphs" >x</text>
<text x="386.65" y="170.8" font-family="Liberation Sans, sans-serif" font-size="10.4" font-weight="bold" fill="#2e8bc8" textLength="5.73" lengthAdjust="spacingAndGlyphs" >2</text>
<text x="337.70" y="221.2" font-family="Liberation Sans, sans-serif" font-size="19.2" fill="#404040" textLength="12.16" lengthAdjust="spacingAndGlyphs" >A</text>
<text x="352.49" y="221.2" font-family="Liberation Sans, sans-serif" font-size="19.2" fill="#404040" textLength="8.64" lengthAdjust="spacingAndGlyphs" >a</text>
<text x="564.16" y="129.8" font-family="Liberation Sans, sans-serif" font-size="8.6" font-weight="bold" fill="#2e8bc8" textLength="3.23" lengthAdjust="spacingAndGlyphs" stroke="#2e8bc8" stroke-width="0.25">1</text>
<text x="563.32" y="139" font-family="Liberation Sans, sans-serif" font-size="8.6" font-weight="bold" fill="#2e8bc8" textLength="5.29" lengthAdjust="spacingAndGlyphs" stroke="#2e8bc8" stroke-width="0.25">2</text>
<text x="563.32" y="148.3" font-family="Liberation Sans, sans-serif" font-size="8.6" font-weight="bold" fill="#2e8bc8" textLength="5.29" lengthAdjust="spacingAndGlyphs" stroke="#2e8bc8" stroke-width="0.25">3</text>
<text x="624.85" y="129.8" font-family="Liberation Sans, sans-serif" font-size="8.6" font-weight="bold" fill="#2e8bc8" textLength="3.35" lengthAdjust="spacingAndGlyphs" stroke="#2e8bc8" stroke-width="0.25">1</text>
<text x="628.97" y="139" font-family="Liberation Sans, sans-serif" font-size="9.6" font-weight="bold" fill="#2e8bc8" textLength="4.89" lengthAdjust="spacingAndGlyphs" stroke="#2e8bc8" stroke-width="0.25">a</text>
<text x="636.64" y="148.3" font-family="Liberation Sans, sans-serif" font-size="8.6" font-weight="bold" fill="#2e8bc8" textLength="2.68" lengthAdjust="spacingAndGlyphs" stroke="#2e8bc8" stroke-width="0.25">i</text>
<text x="629.10" y="211.5" font-family="Liberation Sans, sans-serif" font-size="13.4" fill="#2e8bc8" textLength="9.93" lengthAdjust="spacingAndGlyphs" stroke="#2e8bc8" stroke-width="0.4">A</text>
<text x="628.93" y="225.3" font-family="Liberation Sans, sans-serif" font-size="13.6" fill="#333" textLength="9.42" lengthAdjust="spacingAndGlyphs" stroke="#333" stroke-width="0.4">Z</text>
</g>
</svg>
</body></html>
